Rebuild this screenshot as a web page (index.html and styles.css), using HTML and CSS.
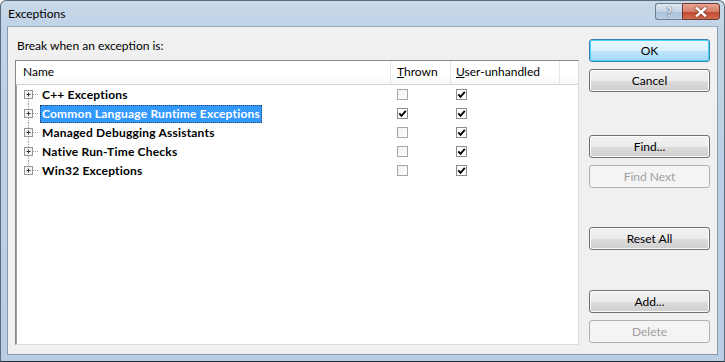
FILE: index.html
```html
<!DOCTYPE html>
<html lang="en">
<head>
    <meta charset="UTF-8">
    <title>Exceptions</title>
    <link rel="stylesheet" href="styles.css">
</head>
<body>
    <div class="window">
        <div class="titlebar">
            <span class="title">Exceptions</span>
            <div class="caption-buttons">
                <div class="cap-btn help">?</div>
                <div class="cap-btn close">
                    <svg width="12" height="10" viewBox="0 0 12 10">
                        <path d="M2 1.5 L10 8.5 M10 1.5 L2 8.5" stroke="#fff" stroke-width="2.4" stroke-linecap="square"/>
                    </svg>
                </div>
            </div>
        </div>
        <div class="client">
            <div class="main">
                <div class="caption">Break when an exception is:</div>
                <div class="list">
                    <div class="row header">
                        <div class="col name">Name</div>
                        <div class="col thrown"><u>T</u>hrown</div>
                        <div class="col unhandled"><u>U</u>ser-unhandled</div>
                        <div class="col filler"></div>
                    </div>
                    <div class="tree">
                        <div class="row item">
                            <div class="col name">
                                <svg class="expander" width="17" height="19" viewBox="0 0 17 19">
                                    <path d="M5.5 14 V19" class="dots"/>
                                    <path d="M10 9.5 H15" class="dots"/>
                                    <rect x="1.5" y="5.5" width="8" height="8" class="box"/>
                                    <path d="M3.5 9.5 H7.5 M5.5 7.5 V11.5" class="plus"/>
                                </svg>
                                <span class="label">C++ Exceptions</span>
                            </div>
                            <div class="col thrown"><span class="cb"></span></div>
                            <div class="col unhandled"><span class="cb on"></span></div>
                        </div>
                        <div class="row item">
                            <div class="col name">
                                <svg class="expander" width="17" height="19" viewBox="0 0 17 19">
                                    <path d="M5.5 0 V5 M5.5 14 V19" class="dots"/>
                                    <path d="M10 9.5 H15" class="dots"/>
                                    <rect x="1.5" y="5.5" width="8" height="8" class="box"/>
                                    <path d="M3.5 9.5 H7.5 M5.5 7.5 V11.5" class="plus"/>
                                </svg>
                                <span class="label selected">Common Language Runtime Exceptions</span>
                            </div>
                            <div class="col thrown"><span class="cb on"></span></div>
                            <div class="col unhandled"><span class="cb on"></span></div>
                        </div>
                        <div class="row item">
                            <div class="col name">
                                <svg class="expander" width="17" height="19" viewBox="0 0 17 19">
                                    <path d="M5.5 0 V5 M5.5 14 V19" class="dots"/>
                                    <path d="M10 9.5 H15" class="dots"/>
                                    <rect x="1.5" y="5.5" width="8" height="8" class="box"/>
                                    <path d="M3.5 9.5 H7.5 M5.5 7.5 V11.5" class="plus"/>
                                </svg>
                                <span class="label">Managed Debugging Assistants</span>
                            </div>
                            <div class="col thrown"><span class="cb"></span></div>
                            <div class="col unhandled"><span class="cb on"></span></div>
                        </div>
                        <div class="row item">
                            <div class="col name">
                                <svg class="expander" width="17" height="19" viewBox="0 0 17 19">
                                    <path d="M5.5 0 V5 M5.5 14 V19" class="dots"/>
                                    <path d="M10 9.5 H15" class="dots"/>
                                    <rect x="1.5" y="5.5" width="8" height="8" class="box"/>
                                    <path d="M3.5 9.5 H7.5 M5.5 7.5 V11.5" class="plus"/>
                                </svg>
                                <span class="label">Native Run-Time Checks</span>
                            </div>
                            <div class="col thrown"><span class="cb"></span></div>
                            <div class="col unhandled"><span class="cb on"></span></div>
                        </div>
                        <div class="row item">
                            <div class="col name">
                                <svg class="expander" width="17" height="19" viewBox="0 0 17 19">
                                    <path d="M5.5 0 V5" class="dots"/>
                                    <path d="M10 9.5 H15" class="dots"/>
                                    <rect x="1.5" y="5.5" width="8" height="8" class="box"/>
                                    <path d="M3.5 9.5 H7.5 M5.5 7.5 V11.5" class="plus"/>
                                </svg>
                                <span class="label">Win32 Exceptions</span>
                            </div>
                            <div class="col thrown"><span class="cb"></span></div>
                            <div class="col unhandled"><span class="cb on"></span></div>
                        </div>
                    </div>
                </div>
            </div>
            <div class="buttons">
                <button class="btn default">OK</button>
                <button class="btn">Cancel</button>
                <button class="btn gap-lg">Find...</button>
                <button class="btn" disabled>Find Next</button>
                <button class="btn gap-xl">Reset All</button>
                <button class="btn gap-xxl">Add...</button>
                <button class="btn" disabled>Delete</button>
            </div>
        </div>
    </div>
</body>
</html>
```

FILE: styles.css
```css
body {
    margin: 0;
    width: 725px;
    height: 362px;
    overflow: hidden;
    font-family: Lato, "Noto Sans", sans-serif;
    font-size: 12px;
    color: #000;
    background: #fff;
}

.window {
    box-sizing: border-box;
    width: 725px;
    height: 362px;
    border: 1px solid #5a6b7c;
    border-bottom-color: #203040;
    border-radius: 6px 6px 0 0;
    background: linear-gradient(#c9d9ea, #bfd2e6 30px, #b9cde3);
    display: flex;
    flex-direction: column;
    padding: 0 6px 6px 6px;
}

.titlebar {
    height: 25px;
    flex-shrink: 0;
    display: flex;
    align-items: flex-start;
    justify-content: space-between;
}

.title {
    padding: 5px 0 0 1px;
    font-size: 12px;
}

.caption-buttons {
    display: flex;
    margin-top: 2px;
    margin-right: -2px;
}

.cap-btn {
    box-sizing: border-box;
    height: 17px;
    border: 1px solid #6b7e93;
    border-radius: 3px;
    display: flex;
    align-items: center;
    justify-content: center;
}

.help {
    width: 27px;
    background: linear-gradient(#dfe8f2, #c3d3e5 50%, #aabfd6 51%, #bccee2);
    color: #f4f7fb;
    font-weight: bold;
    font-size: 13px;
    text-shadow: 0 0 1px #2e4560, 0 0 1px #2e4560;
    border-right: none;
    border-radius: 3px 0 0 3px;
}

.close {
    width: 38px;
    background: linear-gradient(#e8a593, #d47e6a 50%, #c2462e 51%, #d06c50);
    border-color: #6b3a33;
    border-radius: 0 3px 3px 0;
}

.close svg {
    filter: drop-shadow(0 0 1px #5a1a10);
}

.client {
    flex: 1;
    min-height: 0;
    background: #f0f0f0;
    border: 1px solid #8a9bb0;
    border-top-color: #9aabbf;
    display: flex;
    padding: 0 7px 9px 7px;
}

.main {
    width: 564px;
    display: flex;
    flex-direction: column;
}

.caption {
    padding: 11px 0 0 2px;
    height: 22px;
}

.list {
    flex: 1;
    background: #fff;
    border: 1px solid #828790;
    border-right-color: #dcdcdc;
    border-bottom-color: #dcdcdc;
    box-shadow: inset 1px 1px 0 #a0a0a0;
}

.row {
    display: flex;
}

.header {
    height: 23px;
    align-items: center;
    border-bottom: 1px solid #d5d5d5;
    background: linear-gradient(#fff, #fff 60%, #f7f8f9);
}

.header .col {
    height: 23px;
    line-height: 22px;
    box-sizing: border-box;
    border-right: 1px solid #e3e5e8;
}

.header .col.filler {
    border-right: none;
    flex: 1;
}

.col.name {
    width: 375px;
    padding-left: 7px;
    box-sizing: border-box;
}

.col.thrown {
    width: 60px;
    padding-left: 6px;
    box-sizing: border-box;
}

.col.unhandled {
    width: 109px;
    padding-left: 5px;
    box-sizing: border-box;
}

.item {
    height: 19px;
    align-items: center;
}

.item .col.name {
    display: flex;
    align-items: center;
    height: 19px;
    padding-left: 7px;
}

.expander {
    flex-shrink: 0;
}

.expander .dots {
    stroke: #a0a0a0;
    stroke-width: 1;
    stroke-dasharray: 1 1;
    fill: none;
}

.expander .box {
    fill: #f4f4f4;
    stroke: #979797;
    stroke-width: 1;
}

.expander .plus {
    stroke: #333;
    stroke-width: 1;
}

.label {
    font-weight: bold;
    letter-spacing: 0.2px;
    padding: 1px 2px 2px 2px;
    line-height: 15px;
}

.label.selected {
    background: #3399ff;
    color: #fff;
    outline: 1px dotted #1d3f63;
    outline-offset: -1px;
}

.cb {
    display: block;
    width: 9px;
    height: 9px;
    border: 1px solid #a7a7a7;
    background: linear-gradient(135deg, #f0f0f0, #fff);
}

.cb.on {
    border-color: #8c8c8c;
    background: #fff url("data:image/svg+xml,%3Csvg xmlns='http://www.w3.org/2000/svg' width='9' height='9'%3E%3Cpath d='M1.3 4.3 L3.5 6.8 L7.8 1.8' fill='none' stroke='%23000' stroke-width='1.9'/%3E%3C/svg%3E") no-repeat center;
}

.buttons {
    flex: 1;
    display: flex;
    flex-direction: column;
    align-items: flex-end;
    padding-top: 12px;
}

.btn {
    flex-shrink: 0;
    width: 121px;
    height: 23px;
    margin-bottom: 7px;
    font-family: inherit;
    font-size: 12px;
    color: #000;
    border: 1px solid #707070;
    border-radius: 3px;
    background: linear-gradient(#f2f2f2, #ebebeb 50%, #dddddd 51%, #cfcfcf);
    box-shadow: inset 0 0 0 1px #fcfcfc;
    padding: 0;
}

.btn.default {
    border-color: #3c7fb1;
    background: linear-gradient(#eaf6fd, #d9f0fc 50%, #bee6fd 51%, #a7d9f5);
    box-shadow: inset 0 0 0 1px #48d5fb;
}

.btn:disabled {
    color: #a0a0a0;
    border-color: #adb2b5;
    background: #f4f4f4;
    box-shadow: none;
}

.gap-lg {
    margin-top: 36px;
}

.gap-xl {
    margin-top: 32px;
}

.gap-xxl {
    margin-top: 33px;
}
```
